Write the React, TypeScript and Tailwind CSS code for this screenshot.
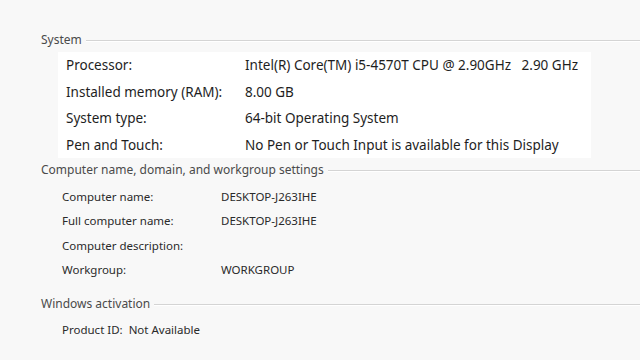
import React from "react";

const font = { fontFamily: '"Noto Sans", "Open Sans", sans-serif' };

function GroupHeader({ title }: { title: string }) {
    return (
        <div className="flex items-center gap-1 pl-[41px] text-[12px] text-[#4a4a4a] leading-none h-[12px]">
            <span className="whitespace-nowrap">{title}</span>
            <div className="flex-1 h-[2px] border-t border-[#d4d4d4] border-b border-b-white mt-[2px]" />
        </div>
    );
}

function Row({ label, value, w }: { label: string; value?: string; w: string }) {
    return (
        <div className="flex items-center h-[24.5px] whitespace-nowrap">
            <span className={w}>{label}</span>
            <span>{value}</span>
        </div>
    );
}

export default function App() {
    const sys = [
        ["Processor:", "Intel(R) Core(TM) i5-4570T CPU @ 2.90GHz   2.90 GHz"],
        ["Installed memory (RAM):", "8.00 GB"],
        ["System type:", "64-bit Operating System"],
        ["Pen and Touch:", "No Pen or Touch Input is available for this Display"],
    ];
    const comp = [
        ["Computer name:", "DESKTOP-J263IHE"],
        ["Full computer name:", "DESKTOP-J263IHE"],
        ["Computer description:", ""],
        ["Workgroup:", "WORKGROUP"],
    ];
    return (
        <div className="w-[640px] h-[360px] bg-[#f8f8f8] overflow-hidden pt-[34px]" style={font}>
            <GroupHeader title="System" />
            <div className="ml-[58px] w-[533px] mt-[6px] bg-white pl-[8px] text-[13.5px] text-[#1e1e1e]">
                {sys.map(([l, v]) => (
                    <div key={l} className="flex items-center h-[26.5px] whitespace-nowrap">
                        <span className="w-[179px]">{l}</span>
                        <span style={{ whiteSpace: "pre" }}>{v}</span>
                    </div>
                ))}
            </div>
            <div className="mt-[6px]">
                <GroupHeader title="Computer name, domain, and workgroup settings" />
            </div>
            <div className="pl-[62px] pt-[8px] text-[11.5px] text-[#2a2a2a]">
                {comp.map(([l, v]) => (
                    <Row key={l} label={l} value={v} w="w-[159px]" />
                ))}
            </div>
            <div className="mt-[16px]">
                <GroupHeader title="Windows activation" />
            </div>
            <div className="pl-[62px] pt-[11px] text-[11.5px] leading-[17px] text-[#2a2a2a] whitespace-pre">
                Product ID:  Not Available
            </div>
        </div>
    );
}
